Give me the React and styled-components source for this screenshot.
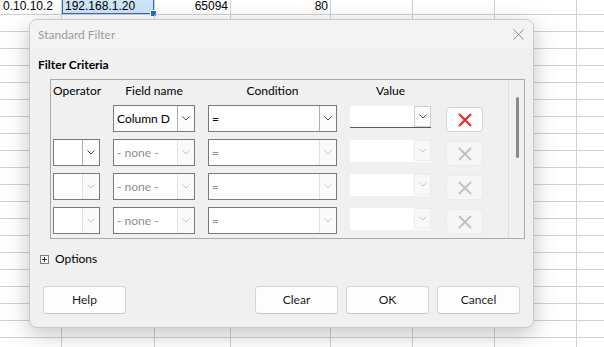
import React from 'react';
import styled, { createGlobalStyle } from 'styled-components';

const GlobalStyle = createGlobalStyle`
  body {
    margin: 0;
    background: #ffffff;
    overflow: hidden;
  }
`;

const Page = styled.div`
  position: relative;
  width: 604px;
  height: 347px;
  overflow: hidden;
  font-family: Lato, "Noto Sans", sans-serif;
`;

// spreadsheet behind the dialog
const Sheet = styled.div`
  display: grid;
  grid-template-columns: 62px 93px 76px 100px 82px 82px 82px 82px;
  grid-template-rows: 16px;
  grid-auto-rows: 17px;
  margin-top: -1px;
  font-family: "Liberation Sans", Arial, sans-serif;
  font-size: 12px;
  color: #000;
`;

const Cell = styled.div`
  position: relative;
  box-sizing: border-box;
  border-right: 1px solid #d0d0d0;
  border-bottom: 1px solid #d0d0d0;
  padding: 0 ${p => (p.$pad || 2)}px 0 3px;
  line-height: 15px;
  text-align: ${p => (p.$right ? 'right' : 'left')};
  white-space: nowrap;
  background: ${p => (p.$selected ? '#cfe4f7' : 'transparent')};
  box-shadow: ${p => (p.$selected ? 'inset 0 0 0 1px #2a6fc6' : 'none')};
`;

const FillHandle = styled.span`
  position: absolute;
  right: -3px;
  bottom: -3px;
  width: 5px;
  height: 5px;
  background: #1e6fd0;
  border: 1px solid #fff;
`;

const Dialog = styled.div`
  position: absolute;
  left: 29px;
  top: 19px;
  width: 505px;
  height: 309px;
  box-sizing: border-box;
  border: 1px solid #c9c9c9;
  border-radius: 8px;
  background: #f0f0f0;
  box-shadow: 0 6px 22px rgba(0, 0, 0, 0.24);
  overflow: hidden;
  display: flex;
  flex-direction: column;
`;

const TitleBar = styled.div`
  height: 29px;
  display: flex;
  align-items: center;
  justify-content: space-between;
  padding: 0 9px 0 8px;
  background: #f3f3f3;
  font-size: 12px;
  color: #9d9d9d;
`;

const Body = styled.div`
  flex: 1;
  display: flex;
  flex-direction: column;
  padding: 8px 13px 0 0;
`;

const Heading = styled.div`
  font-weight: bold;
  font-size: 12px;
  line-height: 16px;
  color: #000;
  padding-left: 8px;
`;

const Frame = styled.div`
  box-sizing: border-box;
  margin: 6px 0 0 20px;
  width: 475px;
  height: 160px;
  border: 1px solid #a9a9a9;
  display: flex;
`;

const Criteria = styled.div`
  width: 455px;
  padding: 0 0 0 2px;
  display: grid;
  grid-template-columns: 47px 82px 129px 81px 39px;
  grid-template-rows: 18px repeat(4, 27px);
  column-gap: 13px;
  row-gap: 7px;
  align-items: start;
  overflow: hidden;
`;

const ColHead = styled.div`
  align-self: end;
  text-align: center;
  font-size: 12px;
  line-height: 14px;
  color: #000;
`;

const ScrollTrack = styled.div`
  flex: 1;
  border-left: 1px solid #dedede;
  display: flex;
  justify-content: center;
  padding-top: 17px;
`;

const Thumb = styled.div`
  width: 3px;
  height: 61px;
  margin-left: 1px;
  border-radius: 2px;
  background: #8a8a8a;
`;

const Combo = styled.div`
  box-sizing: border-box;
  height: 27px;
  border: 1px solid #7a7a7a;
  background: #fff;
  display: flex;
  align-items: stretch;
`;

const ComboText = styled.div`
  flex: 1;
  padding-left: 3px;
  font-size: 12px;
  line-height: 25px;
  color: ${p => (p.$muted ? '#8c8c8c' : '#000')};
  white-space: nowrap;
  overflow: hidden;
`;

const DropButton = styled.div`
  box-sizing: border-box;
  width: 17px;
  border-left: 1px solid ${p => (p.$off ? '#e2e2e2' : '#aeaeae')};
  background: ${p => (p.$off ? '#fafafa' : '#fcfcfc')};
  display: flex;
  align-items: center;
  justify-content: center;
`;

const ValueField = styled.div`
  box-sizing: border-box;
  margin-top: 1px;
  height: 22px;
  background: #fff;
  border-bottom: 1px solid ${p => (p.$off ? 'transparent' : '#5c5c5c')};
  display: flex;
  justify-content: flex-end;
`;

const ValueButton = styled.div`
  box-sizing: border-box;
  width: 17px;
  border: 1px solid ${p => (p.$off ? '#ececec' : '#cfcfcf')};
  background: ${p => (p.$off ? '#f8f8f8' : '#fbfbfb')};
  display: flex;
  align-items: center;
  justify-content: center;
`;

const DeleteButton = styled.div`
  justify-self: end;
  box-sizing: border-box;
  margin-top: 2px;
  width: 37px;
  height: 25px;
  border-radius: 4px;
  border: 1px solid ${p => (p.$off ? '#ebebeb' : '#d3d3d3')};
  background: ${p => (p.$off ? '#f6f6f6' : '#fdfdfd')};
  display: flex;
  align-items: center;
  justify-content: center;
`;

const OptionsRow = styled.div`
  margin-top: 13px;
  padding-left: 10px;
  display: flex;
  align-items: center;
  gap: 6px;
  font-size: 12px;
  line-height: 14px;
  color: #000;
`;

const Expander = styled.span`
  box-sizing: border-box;
  width: 9px;
  height: 9px;
  border: 1px solid #7d7d7d;
  background: #f7f7f7;
  display: flex;
  align-items: center;
  justify-content: center;
`;

const ButtonRow = styled.div`
  margin-top: 20px;
  padding-left: 13px;
  display: flex;
  gap: 8px;
`;

const Spacer = styled.div`
  flex: 1;
`;

const PushButton = styled.div`
  box-sizing: border-box;
  width: 83px;
  height: 28px;
  border: 1px solid #d5d5d5;
  border-bottom-color: #c6c6c6;
  border-radius: 4px;
  background: #fdfdfd;
  font-size: 12px;
  line-height: 26px;
  text-align: center;
  color: #1a1a1a;
`;

const Chevron = ({ off }) => (
  <svg width="8" height="5" viewBox="0 0 8 5">
    <path d="M0.5 0.5 L4 4 L7.5 0.5" fill="none" stroke={off ? '#c6c6c6' : '#4a4a4a'} strokeWidth="1" />
  </svg>
);

const Cross = ({ off }) => (
  <svg width="14" height="14" viewBox="0 0 14 14">
    <path d="M1 1 L13 13 M13 1 L1 13" fill="none" stroke={off ? '#c3c3c3' : '#e8262c'} strokeWidth="2" />
  </svg>
);

const CloseIcon = () => (
  <svg width="11" height="11" viewBox="0 0 11 11">
    <path d="M0.5 0.5 L10.5 10.5 M10.5 0.5 L0.5 10.5" fill="none" stroke="#8c8c8c" strokeWidth="1" />
  </svg>
);

const PlusIcon = () => (
  <svg width="7" height="7" viewBox="0 0 7 7">
    <path d="M1 3.5 H6 M3.5 1 V6" fill="none" stroke="#2c3a5c" strokeWidth="1" />
  </svg>
);

const firstRow = [
  { text: '0.10.10.2', right: true, pad: 8 },
  { text: '192.168.1.20', selected: true },
  { text: '65094', right: true },
  { text: '80', right: true },
  {}, {}, {}, {},
];

const rows = [
  { op: false, field: 'Column D', cond: '=', off: false },
  { op: true, opOff: false, field: '- none -', cond: '=', off: true },
  { op: true, opOff: true, field: '- none -', cond: '=', off: true },
  { op: true, opOff: true, field: '- none -', cond: '=', off: true },
];

function App() {
  const blankRows = Array.from({ length: 21 });

  return (
    <>
      <GlobalStyle />
      <Page>
        <Sheet>
          {firstRow.map((c, i) => (
            <Cell key={i} $right={c.right} $pad={c.pad} $selected={c.selected}>
              {c.text}
              {c.selected && <FillHandle />}
            </Cell>
          ))}
          {blankRows.map((_, r) =>
            firstRow.map((_, i) => <Cell key={`${r}-${i}`} />)
          )}
        </Sheet>

        <Dialog>
          <TitleBar>
            <span>Standard Filter</span>
            <CloseIcon />
          </TitleBar>
          <Body>
            <Heading>Filter Criteria</Heading>
            <Frame>
              <Criteria>
                <ColHead>Operator</ColHead>
                <ColHead>Field name</ColHead>
                <ColHead>Condition</ColHead>
                <ColHead>Value</ColHead>
                <div />
                {rows.map((row, i) => (
                  <React.Fragment key={i}>
                    {row.op ? (
                      <Combo>
                        <ComboText />
                        <DropButton $off={row.opOff}>
                          <Chevron off={row.opOff} />
                        </DropButton>
                      </Combo>
                    ) : (
                      <div />
                    )}
                    <Combo>
                      <ComboText $muted={row.off}>{row.field}</ComboText>
                      <DropButton $off={row.off}>
                        <Chevron off={row.off} />
                      </DropButton>
                    </Combo>
                    <Combo>
                      <ComboText $muted={row.off}>{row.cond}</ComboText>
                      <DropButton $off={row.off}>
                        <Chevron off={row.off} />
                      </DropButton>
                    </Combo>
                    <ValueField $off={row.off}>
                      <ValueButton $off={row.off}>
                        <Chevron off={row.off} />
                      </ValueButton>
                    </ValueField>
                    <DeleteButton $off={row.off}>
                      <Cross off={row.off} />
                    </DeleteButton>
                  </React.Fragment>
                ))}
              </Criteria>
              <ScrollTrack>
                <Thumb />
              </ScrollTrack>
            </Frame>
            <OptionsRow>
              <Expander>
                <PlusIcon />
              </Expander>
              Options
            </OptionsRow>
            <ButtonRow>
              <PushButton>Help</PushButton>
              <Spacer />
              <PushButton>Clear</PushButton>
              <PushButton>OK</PushButton>
              <PushButton>Cancel</PushButton>
            </ButtonRow>
          </Body>
        </Dialog>
      </Page>
    </>
  );
}

export default App;
